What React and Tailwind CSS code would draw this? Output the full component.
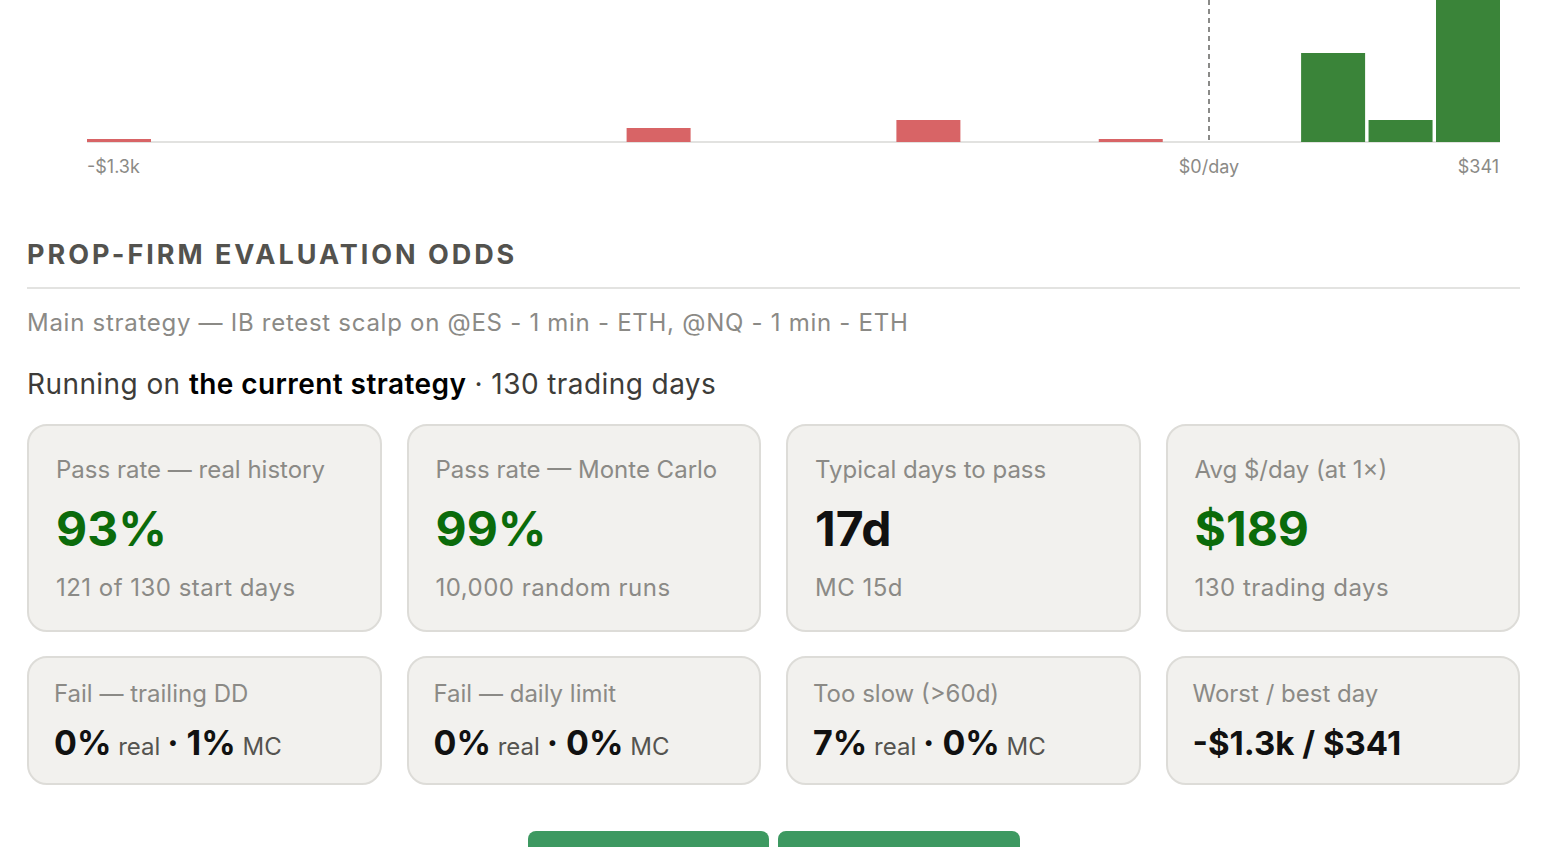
const bins = [
  { i: 0, h: 3, color: "#d86466" },
  { i: 8, h: 14, color: "#d86466" },
  { i: 12, h: 22, color: "#d86466" },
  { i: 15, h: 3, color: "#d86466" },
  { i: 18, h: 89, color: "#3a8439" },
  { i: 19, h: 22, color: "#3a8439" },
  { i: 20, h: 160, color: "#3a8439" },
];

const topCards = [
  { label: "Pass rate — real history", value: "93%", sub: "121 of 130 start days", green: true },
  { label: "Pass rate — Monte Carlo", value: "99%", sub: "10,000 random runs", green: true },
  { label: "Typical days to pass", value: "17d", sub: "MC 15d", green: false },
  { label: "Avg $/day (at 1×)", value: "$189", sub: "130 trading days", green: true },
];

const bottomCards = [
  { label: "Fail — trailing DD", real: "0%", mc: "1%" },
  { label: "Fail — daily limit", real: "0%", mc: "0%" },
  { label: "Too slow (>60d)", real: "7%", mc: "0%" },
  { label: "Worst / best day", plain: "-$1.3k / $341" },
];

function Histogram() {
  const step = 67.45;
  return (
    <div>
      <svg width="1494" height="143" className="block overflow-hidden">
        <line x1="60" x2="1473" y1="142" y2="142" stroke="#e2e2e0" strokeWidth="2" />
        {bins.map((b) => (
          <rect
            key={b.i}
            x={60 + b.i * step}
            y={142 - b.h}
            width="64"
            height={b.h}
            fill={b.color}
          />
        ))}
        <line x1="1182" x2="1182" y1="0" y2="142" stroke="#8a8a88" strokeWidth="2" strokeDasharray="5 4" />
      </svg>
      <div className="relative mt-3 h-6 text-[18px] leading-6 text-[#8b8a86]">
        <span className="absolute left-[60px] top-0">-$1.3k</span>
        <span className="absolute left-[1182px] top-0 -translate-x-1/2">$0/day</span>
        <span className="absolute right-[21px] top-0">$341</span>
      </div>
    </div>
  );
}

export default function App() {
  return (
    <div
      className="h-[847px] overflow-hidden bg-white px-[27px]"
      style={{ fontFamily: "Inter, 'Noto Sans', sans-serif" }}
    >
      <Histogram />

      <h2 className="mt-[60px] border-b-2 border-[#e3e3e1] pb-4 text-[27px] font-bold leading-8 tracking-[0.11em] text-[#53524e]">
        PROP-FIRM EVALUATION ODDS
      </h2>

      <p className="mt-[18px] text-[24px] leading-8 tracking-[0.03em] text-[#8b8a86]">
        Main strategy — IB retest scalp on @ES - 1 min - ETH, @NQ - 1 min - ETH
      </p>

      <p className="mt-[27px] text-[28px] leading-9 tracking-[0.015em] text-[#3d3c39]">
        Running on <span className="font-semibold text-black">the current strategy</span> · 130 trading days
      </p>

      <div className="mt-[22px] grid grid-cols-4 gap-[25px]">
        {topCards.map((c) => (
          <div
            key={c.label}
            className="rounded-[20px] border-2 border-[#dddcd8] bg-[#f2f1ee] px-[27px] pb-[26px] pt-[28px]"
          >
            <div className="text-[24px] leading-8 text-[#8b8a86]">{c.label}</div>
            <div
              className={
                "mt-[14px] text-[48px] font-bold leading-[58px] " +
                (c.green ? "text-[#0b6b0b]" : "text-[#111111]")
              }
            >
              {c.value}
            </div>
            <div className="mt-[14px] text-[24px] leading-8 tracking-[0.02em] text-[#8b8a86]">{c.sub}</div>
          </div>
        ))}
      </div>

      <div className="mt-[24px] grid grid-cols-4 gap-[25px]">
        {bottomCards.map((c) => (
          <div
            key={c.label}
            className="rounded-[20px] border-2 border-[#dddcd8] bg-[#f2f1ee] px-[25px] pb-[15px] pt-[20px]"
          >
            <div className="text-[24px] leading-8 text-[#8b8a86]">{c.label}</div>
            <div className="mt-3 text-[34px] font-bold leading-[42px] text-[#111111]">
              {c.plain ? (
                <span className="text-[33px]">{c.plain}</span>
              ) : (
                <>
                  {c.real}
                  <span className="text-[24px] font-normal text-[#555450]"> real </span>
                  ·{" "}{c.mc}
                  <span className="text-[24px] font-normal text-[#555450]"> MC</span>
                </>
              )}
            </div>
          </div>
        ))}
      </div>

      <div className="mt-[46px] flex justify-center gap-[9px]">
        <button className="h-12 w-[241px] rounded-lg bg-[#3d9961]" />
        <button className="h-12 w-[242px] rounded-lg bg-[#3d9961]" />
      </div>
    </div>
  );
}
